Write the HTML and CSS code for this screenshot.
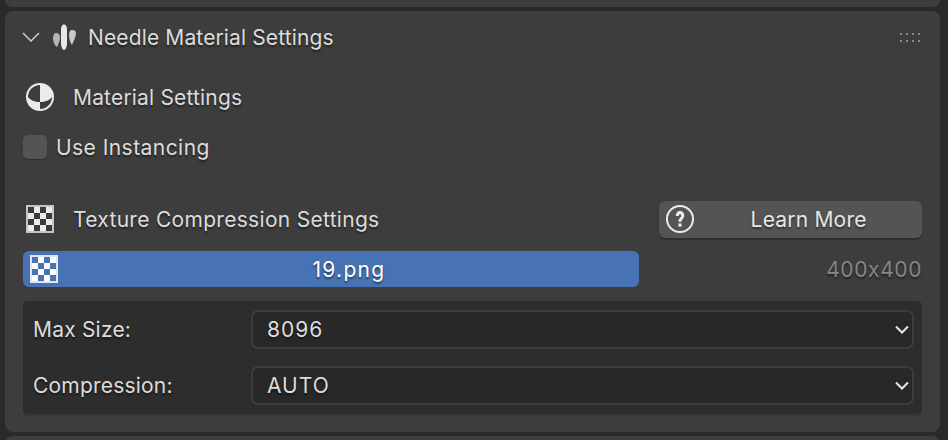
FILE: index.html
```html
<!DOCTYPE html>
<html lang="en">
<head>
  <meta charset="UTF-8" />
  <title>Needle Material Settings</title>
  <link rel="stylesheet" href="styles.css">
</head>
<body>
  <div class="stub stub-top"></div>

  <div class="panel">
    <div class="panel-head">
      <svg class="chevron" width="18" height="10" viewBox="0 0 18 10"><path d="M1 1l8 8 8-8" fill="none" stroke="#cfcfcf" stroke-width="1.500"/></svg>
      <svg class="logo" width="24" height="26" viewBox="0 0 24 26">
        <path d="M12 0.500c1.800 0 3 2 3 5v14c0 2.500-1.200 6-3 6.500-1.800-.5-3-4-3-6.500v-14c0-3 1.200-5 3-5z" fill="#e8e8e8"/>
        <path d="M4 9c2 0 4 1.500 4 4 0 4-1.500 7-3 10-2-1-4-5-4-9 0-3 1.500-5 3-5z" fill="#b5b5b5"/>
        <path d="M20 6c2.500 0 4 1 4 3 0 4-2.500 8-4 12-1.500-2-3-6-3-10 0-3 1-5 3-5z" fill="#c8c8c8"/>
      </svg>
      <span class="panel-title">Needle Material Settings</span>
      <div class="grip"><i></i><i></i><i></i><i></i><i></i><i></i><i></i><i></i></div>
    </div>

    <div class="row row-material">
      <svg class="row-icon" width="30" height="30" viewBox="0 0 30 30">
        <circle cx="15" cy="15" r="14" fill="#ebebeb"/>
        <path d="M15 3A12 12 0 0 0 3 15c2 3 7 5 12 5z" fill="#3d3d3d"/>
        <path d="M15 20c5 0 10-2 12-5a12 12 0 0 1-12 12z" fill="#3d3d3d"/>
      </svg>
      <span>Material Settings</span>
    </div>

    <label class="check-row">
      <span class="check"></span>
      <span>Use Instancing</span>
    </label>

    <div class="row row-texture">
      <div class="texture-label">
        <svg class="row-icon" width="28" height="28" viewBox="0 0 28 28">
          <rect width="28" height="28" fill="#c4c4c4"/>
          <rect x="2" y="2" width="24" height="24" fill="#ececec"/>
          <path d="M2 2h6v6H2zM14 2h6v6h-6zM8 8h6v6H8zM20 8h6v6h-6zM2 14h6v6H2zM14 14h6v6h-6zM8 20h6v6H8zM20 20h6v6h-6z" fill="#3a3a3a"/>
        </svg>
        <span>Texture Compression Settings</span>
      </div>
      <button class="learn-btn">
        <svg width="30" height="30" viewBox="0 0 30 30">
          <circle cx="15" cy="15" r="13" fill="none" stroke="#ebebeb" stroke-width="2"/>
          <path d="M10.800 12c0-2.800 1.900-4.900 4.200-4.900s4.300 1.700 4.300 4.400c0 3.400-2.700 3.500-2.700 6.300h-3.200c0-3.800 2.800-3.800 2.800-6.200 0-.8-.4-1.400-1.200-1.400-.9 0-1.200.8-1.200 1.800z" fill="#ebebeb"/>
          <rect x="13.400" y="19.400" width="3.200" height="3.200" fill="#ebebeb"/>
        </svg>
        <span class="learn-text">Learn More</span>
      </button>
    </div>

    <div class="row row-file">
      <div class="file-bar">
        <svg class="file-icon" width="28" height="28" viewBox="0 0 28 28">
          <rect width="28" height="28" fill="#dfe6f2"/>
          <rect x="2" y="2" width="24" height="24" fill="#fff"/>
          <path d="M2 2h6v6H2zM14 2h6v6h-6zM8 8h6v6H8zM20 8h6v6h-6zM2 14h6v6H2zM14 14h6v6h-6zM8 20h6v6H8zM20 20h6v6h-6z" fill="#4772b3"/>
        </svg>
        <span class="file-name">19.png</span>
      </div>
      <span class="file-size">400x400</span>
    </div>

    <div class="options">
      <div class="option">
        <span class="option-label">Max Size:</span>
        <div class="select">
          <span>8096</span>
          <svg width="14" height="9" viewBox="0 0 14 9"><path d="M1 1.500l6 6 6-6" fill="none" stroke="#e6e6e6" stroke-width="2"/></svg>
        </div>
      </div>
      <div class="option">
        <span class="option-label">Compression:</span>
        <div class="select">
          <span>AUTO</span>
          <svg width="14" height="9" viewBox="0 0 14 9"><path d="M1 1.500l6 6 6-6" fill="none" stroke="#e6e6e6" stroke-width="2"/></svg>
        </div>
      </div>
    </div>
  </div>

  <div class="stub stub-bottom"></div>
</body>
</html>
```

FILE: styles.css
```css
html, body {
  height: 100%;
}

body {
  margin: 0;
  background-color: #2a2a2a;
  font-family: Inter, "Liberation Sans", sans-serif;
  font-size: 21px;
  font-feature-settings: "calt" 0;
  letter-spacing: 0.3px;
  color: #dcdcdc;
  overflow: hidden;
  text-shadow: 0 2px 2px rgba(0, 0, 0, 0.45);
}

.stub {
  margin: 0 8px 0 5px;
  background-color: #3d3d3d;
}

.stub-top {
  height: 7px;
  border-radius: 0 0 8px 8px;
}

.stub-bottom {
  height: 8px;
  border-radius: 8px 8px 0 0;
}

.panel {
  box-sizing: border-box;
  height: 421px;
  margin: 4px 8px 4px 5px;
  padding: 0 18px;
  background-color: #3d3d3d;
  border-radius: 8px;
}

.panel-head {
  display: flex;
  align-items: center;
  height: 52px;
}

.chevron {
  margin-left: -1px;
}

.logo {
  margin-left: 12px;
}

.panel-title {
  margin-left: 12px;
  letter-spacing: 0.13px;
}

.grip {
  display: grid;
  grid-template-columns: repeat(4, 2px);
  gap: 5px 4px;
  margin-left: auto;
  margin-right: 2px;
}

.grip i {
  width: 2px;
  height: 2px;
  background-color: #8a8a8a;
}

.row {
  display: flex;
  align-items: center;
}

.row-material {
  height: 38px;
  margin-top: 15px;
  padding-left: 2px;
  letter-spacing: 0.18px;
}

.row-material span {
  margin-left: 18px;
}

.check-row {
  display: flex;
  align-items: center;
  height: 38px;
  margin-top: 12px;
  letter-spacing: 0.45px;
}

.check {
  width: 24px;
  height: 24px;
  margin-right: 9px;
  background-color: #545454;
  border-radius: 5px;
  box-shadow: 0 1px 1px rgba(0, 0, 0, 0.3);
}

.row-texture {
  height: 38px;
  margin-top: 34px;
}

.texture-label {
  display: flex;
  align-items: center;
  width: 636px;
  padding-left: 3px;
}

.texture-label span {
  margin-left: 19px;
}

.learn-btn {
  display: flex;
  align-items: center;
  width: 264px;
  height: 37px;
  padding: 0 0 0 6px;
  border: none;
  border-radius: 6px;
  background-color: #545454;
  box-shadow: 0 2px 1px rgba(0, 0, 0, 0.25);
  font: inherit;
  letter-spacing: 0.2px;
  color: #e6e6e6;
  text-shadow: inherit;
}

.learn-text {
  flex: 1;
  text-align: center;
}

.row-file {
  height: 36px;
  margin-top: 13px;
}

.file-bar {
  position: relative;
  box-sizing: border-box;
  display: flex;
  align-items: center;
  justify-content: center;
  width: 616px;
  height: 36px;
  padding-left: 36px;
  border-radius: 6px;
  background-color: #4772b3;
  color: #fff;
}

.file-name {
  letter-spacing: 1.3px;
}

.file-icon {
  position: absolute;
  left: 7px;
  top: 4px;
}

.file-size {
  margin-left: auto;
  letter-spacing: 0.6px;
  color: #858585;
}

.options {
  box-sizing: border-box;
  height: 113px;
  margin-top: 14px;
  padding: 9px 8px 0 10px;
  background-color: #2d2d2d;
  border-radius: 5px;
  box-shadow: 0 2px 0 #363636;
  letter-spacing: 0.2px;
}

.option {
  display: flex;
  align-items: center;
  margin-bottom: 17px;
}

.option-label {
  width: 218px;
}

.select {
  box-sizing: border-box;
  display: flex;
  align-items: center;
  justify-content: space-between;
  flex: 1;
  height: 39px;
  padding: 0 3px 0 14px;
  background-color: #282828;
  border: 2px solid #3d3d3d;
  border-radius: 7px;
  letter-spacing: 1px;
}
```
